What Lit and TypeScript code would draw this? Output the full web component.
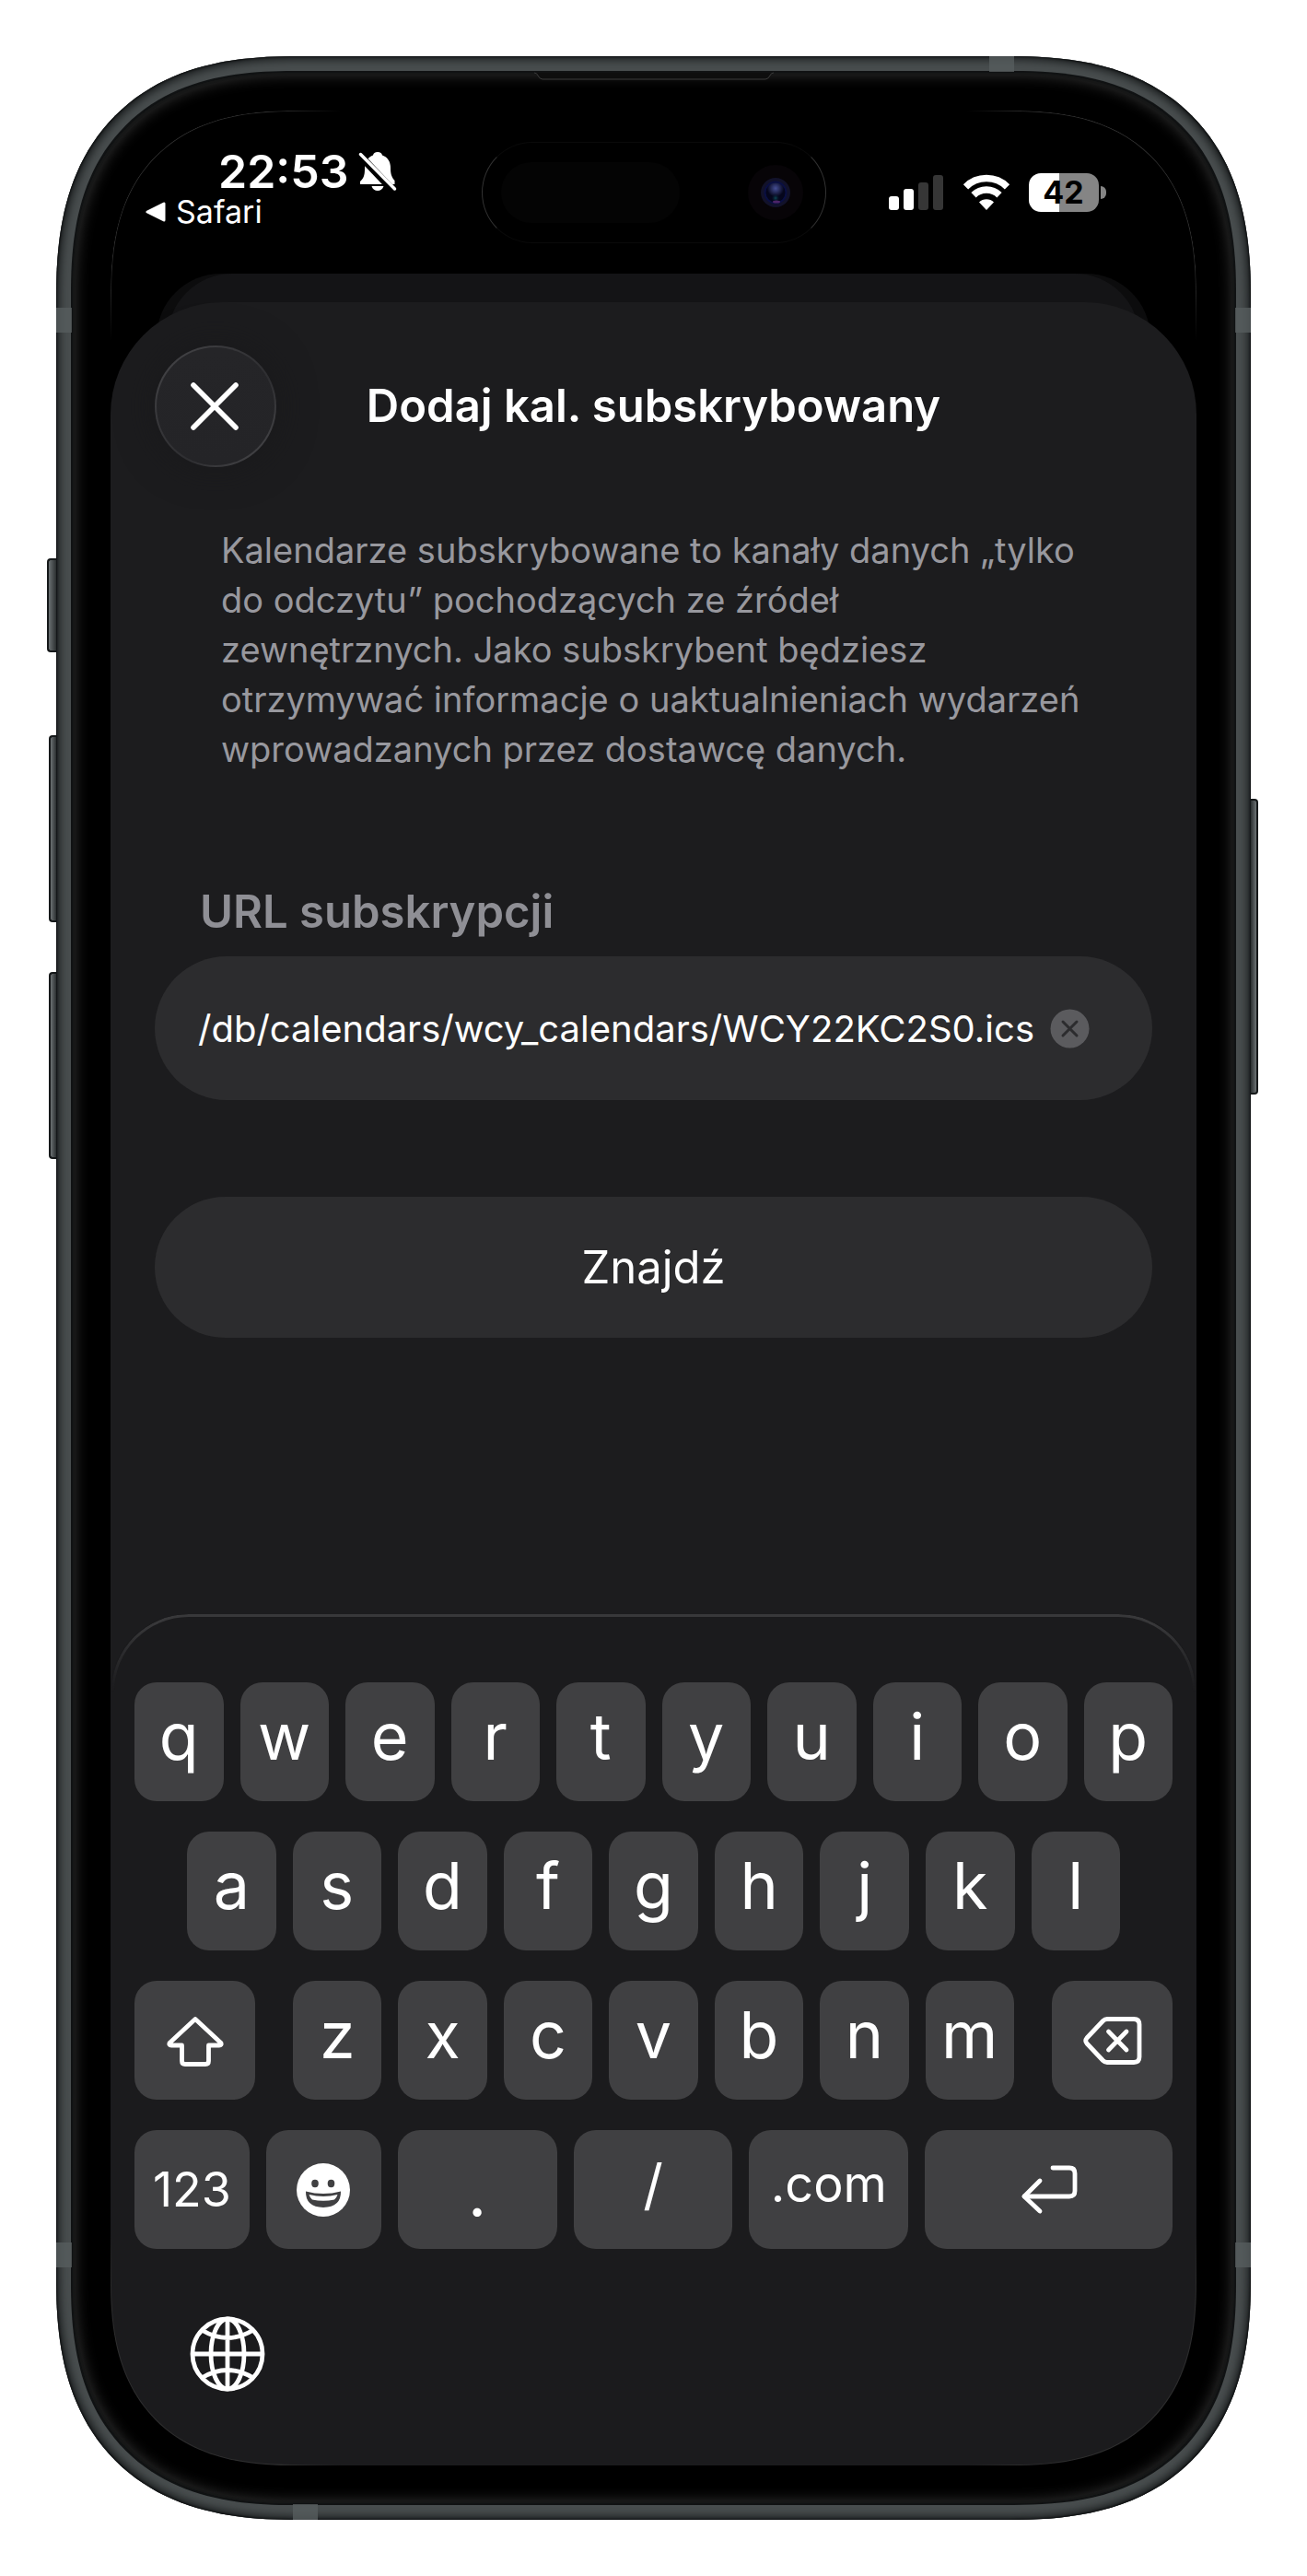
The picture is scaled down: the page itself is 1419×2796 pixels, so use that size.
import { LitElement, html, css, svg } from "lit";
import { customElement, state } from "lit/decorators.js";

const bellOff = svg`<svg class="bell" viewBox="0 0 42 44" aria-hidden="true">
  <path d="M21 1c3 0 4.500 1.500 5 3.500 6 2 9 7 9 14 0 7 1.500 10 4.500 13.500V36H2v-3c3.500-3 5-6.500 5-13.500C7 12 10 6.500 16 4.500 16.500 2.500 18 1 21 1z" fill="#fff"/>
  <path d="M14.500 38h13c-1 3.200-3.600 5-6.500 5s-5.500-1.800-6.500-5z" fill="#fff"/>
  <path d="M0 3 38 43" stroke="#000" stroke-width="8"/>
  <path d="M2.500 3.500 39.500 41" stroke="#fff" stroke-width="3.500" stroke-linecap="round"/>
</svg>`;

const signal = svg`<svg class="signal" viewBox="0 0 60 40" aria-hidden="true">
  <rect x="0" y="24" width="11" height="15" rx="3" fill="#fff"/>
  <rect x="16" y="16" width="11" height="23" rx="3" fill="#fff"/>
  <rect x="32" y="9" width="11" height="30" rx="3" fill="#363636"/>
  <rect x="48" y="1" width="11" height="38" rx="3" fill="#363636"/>
</svg>`;

const wifi = svg`<svg class="wifi" viewBox="0 0 52 40" aria-hidden="true">
  <g fill="none" stroke="#fff" stroke-width="7.500">
    <path d="M3.500 13.800a32 32 0 0 1 45 0"/>
    <path d="M12 22.800a20 20 0 0 1 28 0"/>
  </g>
  <path d="M26 39l-8-8.500a11.500 11.500 0 0 1 16 0z" fill="#fff"/>
</svg>`;

const shiftIcon = svg`<svg class="icon" viewBox="0 0 64 56" aria-hidden="true">
  <path d="M32 4.500 60 30.500q1 2.500-2 2.500H46.500v17q0 3.500-3.500 3.500H21q-3.500 0-3.500-3.500V33H6q-3 0-2-2.500z" fill="none" stroke="#fff" stroke-width="4.800" stroke-linejoin="round"/>
</svg>`;

const deleteIcon = svg`<svg class="icon" viewBox="0 0 64 56" aria-hidden="true">
  <g fill="none" stroke="#fff" stroke-width="4.800" stroke-linejoin="round" stroke-linecap="round">
    <path d="M26 4.500h29q6 0 6 6v35q0 6-6 6H26q-2.500 0-4.500-2L4 31q-2.500-3 0-6L21.500 6.500q2-2 4.500-2z"/>
    <path d="M27.500 18 47 38M47 18 27.500 38"/>
  </g>
</svg>`;

const returnIcon = svg`<svg class="icon" viewBox="0 0 64 56" aria-hidden="true">
  <g fill="none" stroke="#fff" stroke-width="4.800" stroke-linejoin="round" stroke-linecap="round">
    <path d="M36 4h18q6 0 6 6v19q0 6-6 6H5"/>
    <path d="M22 18 5 35l17 16"/>
  </g>
</svg>`;

const emojiIcon = svg`<svg class="icon" viewBox="0 0 64 64" aria-hidden="true">
  <circle cx="32" cy="32" r="29" fill="#fff"/>
  <ellipse cx="23" cy="25" rx="3.800" ry="4.200" fill="#404042"/>
  <ellipse cx="40.500" cy="25" rx="3.800" ry="4.200" fill="#404042"/>
  <path d="M13 33.500q19 5 38 0 .5 17-19 17.500-19.500-.5-19-17.500z" fill="#404042"/>
  <path d="M16.500 37q15.500 4 31 0-1 3.500-3.500 5.500-12 2.500-24 0-2.500-2-3.500-5.500z" fill="#fff"/>
</svg>`;

const globeIcon = svg`<svg class="globe-icon" viewBox="0 0 82 82" aria-hidden="true">
  <g fill="none" stroke="#fff" stroke-width="4.800">
    <circle cx="41" cy="41" r="38"/>
    <ellipse cx="41" cy="41" rx="18" ry="38"/>
    <path d="M41 3v76M3 41h76M13 15q28 17 56 0M13 67q28-17 56 0"/>
  </g>
</svg>`;

@customElement("ios-key")
class IosKey extends LitElement {
  static properties = { name: {} };
  name = "";
  static styles = css`
    :host { display: flex; }
    button {
      flex: 1;
      min-width: 0;
      height: 129px;
      padding: 0;
      border: 0;
      border-radius: 24px;
      background: #404042;
      color: #fff;
      font: inherit;
      display: flex;
      align-items: center;
      justify-content: center;
    }
  `;
  render() {
    return html`<button type="button" aria-label=${this.name}><slot></slot></button>`;
  }
}

@customElement("ios-keyboard")
class IosKeyboard extends LitElement {
  static styles = css`
    :host {
      display: block;
      position: relative;
      padding: 74px 26px 80px;
      background: #1b1b1d;
      border-radius: 84px 84px 0 0;
      font-size: 70px;
      line-height: 84px;
    }
    .edge {
      position: absolute;
      inset: 0 1px auto;
      height: 100px;
      box-sizing: border-box;
      border: 3px solid #38383a;
      border-bottom: 0;
      border-radius: 84px 84px 0 0;
      mask-image: linear-gradient(#000 10px, transparent 84px);
      pointer-events: none;
    }
    .rows { display: flex; flex-direction: column; gap: 33px; }
    .row { display: flex; gap: 18px; }
    .home { padding: 0 57px; }
    .letters { flex: 1; display: flex; gap: 18px; padding: 0 23px; }
    .letter { flex: 1 1 0; min-width: 0; }
    .cap { padding-bottom: 12px; }
    .side { flex: 0 0 131px; }
    .mode { flex: 125 1 0; font-size: 52px; min-width: 0; }
    .symbol { flex: 173 1 0; min-width: 0; }
    .slash { font-size: 60px; }
    .domain { font-size: 54px; }
    .enter { flex: 269 1 0; min-width: 0; }
    .dot { padding-top: 8px; }
    .icon { display: block; width: 64px; }
    .globe {
      display: block;
      margin: 73px 0 0 60px;
      padding: 0;
      border: 0;
      background: none;
    }
    .globe-icon { display: block; width: 82px; height: 82px; }
  `;
  private letters(keys: string) {
    return [...keys].map(
      (k) => html`<ios-key class="letter" name=${k}><span class="cap">${k}</span></ios-key>`
    );
  }
  render() {
    return html`
      <div class="edge"></div>
      <div class="rows">
        <div class="row">${this.letters("qwertyuiop")}</div>
        <div class="row home">${this.letters("asdfghjkl")}</div>
        <div class="row">
          <ios-key class="side" name="Shift">${shiftIcon}</ios-key>
          <div class="letters">${this.letters("zxcvbnm")}</div>
          <ios-key class="side" name="Usuń">${deleteIcon}</ios-key>
        </div>
        <div class="row">
          <ios-key class="mode" name="123">123</ios-key>
          <ios-key class="mode" name="Emoji">${emojiIcon}</ios-key>
          <ios-key class="symbol" name="."><span class="dot">.</span></ios-key>
          <ios-key class="symbol slash" name="/"><span class="cap">/</span></ios-key>
          <ios-key class="symbol domain" name=".com"><span class="cap">.com</span></ios-key>
          <ios-key class="enter" name="Enter">${returnIcon}</ios-key>
        </div>
      </div>
      <button class="globe" type="button" aria-label="Klawiatura">${globeIcon}</button>
    `;
  }
}

@customElement("status-bar")
class StatusBar extends LitElement {
  static styles = css`
    :host {
      display: grid;
      grid-template-columns: 1fr 374px 1fr;
      align-items: center;
      padding: 34px 0 33px;
      color: #fff;
    }
    .left { padding: 0 0 10px 38px; }
    .clock { display: flex; align-items: center; gap: 10px; padding-left: 79px; font-size: 50px; line-height: 50px; font-weight: 600; }
    .back { display: flex; align-items: center; gap: 11px; margin-top: 2px; font-size: 34px; line-height: 34px; color: #fff; text-decoration: none; }
    .arrow { width: 22px; height: 22px; }
    .bell { width: 42px; height: 44px; }
    .island {
      box-sizing: border-box;
      height: 110px;
      padding: 0 20px;
      border: 1px solid #0a0a0a;
      border-left-color: #333;
      border-right-color: #333;
      border-radius: 55px;
      display: flex;
      align-items: center;
      justify-content: space-between;
    }
    .sensor { width: 194px; height: 66px; border-radius: 33px; background: #040404; }
    .camera { width: 60px; height: 60px; margin-right: 4px; }
    .right { display: flex; align-items: center; gap: 20px; padding-left: 68px; }
    .signal { width: 60px; height: 40px; }
    .wifi { width: 52px; height: 40px; }
    .battery { display: flex; align-items: center; gap: 2px; }
    .level {
      width: 76px;
      height: 42px;
      border-radius: 13px;
      background: linear-gradient(90deg, #fff 43%, #858585 43%);
      color: #000;
      font-size: 34px;
      line-height: 42px;
      font-weight: 700;
      text-align: center;
    }
    .nub { width: 6px; height: 14px; border-radius: 0 6px 6px 0; background: #858585; }
  `;
  render() {
    return html`
      <div class="left">
        <div class="clock"><span>22:53</span>${bellOff}</div>
        <a class="back" href="#">
          <svg class="arrow" viewBox="0 0 22 22" aria-hidden="true">
            <path d="M2 11 20 2v18z" fill="#fff" stroke="#fff" stroke-width="3" stroke-linejoin="round" />
          </svg>
          <span>Safari</span>
        </a>
      </div>
      <div class="island">
        <div class="sensor"></div>
        <svg class="camera" viewBox="0 0 60 60" aria-hidden="true">
          <defs>
            <radialGradient id="sheen" cx="50%" cy="30%" r="40%">
              <stop offset="0" stop-color="#454e94" />
              <stop offset="1" stop-color="#05061c" />
            </radialGradient>
            <radialGradient id="glow" cx="50%" cy="50%" r="50%">
              <stop offset="0" stop-color="#0c4a56" />
              <stop offset="1" stop-color="#05061c" stop-opacity="0" />
            </radialGradient>
          </defs>
          <circle cx="30" cy="30" r="30" fill="#070407" />
          <circle cx="30" cy="30" r="16" fill="#12122a" />
          <circle cx="30" cy="30" r="11.500" fill="url(#sheen)" stroke="#0a0f42" stroke-width="2" />
          <circle cx="30" cy="36" r="5" fill="url(#glow)" />
          <ellipse cx="31" cy="40" rx="4" ry="1.500" fill="#4c2468" />
        </svg>
      </div>
      <div class="right">
        ${signal}${wifi}
        <div class="battery"><div class="level">42</div><div class="nub"></div></div>
      </div>
    `;
  }
}

@customElement("app-root")
class AppRoot extends LitElement {
  @state() private url = "/db/calendars/wcy_calendars/WCY22KC2S0.ics";

  static styles = css`
    :host {
      display: block;
      padding: 61px;
      background: #fff;
      font-family: Inter, "Liberation Sans", sans-serif;
    }
    .phone {
      position: relative;
      padding: 18px;
      border-radius: 226px;
      background: #484d4e;
      box-shadow: inset 0 0 2px 1px #101213, inset 0 0 9px 4px #1d2021;
    }
    .bezel {
      padding: 41px;
      border-radius: 208px;
      background: #000;
      box-shadow: 0 0 0 2px #101213, inset 0 0 0 2px #161717, inset 0 0 16px 2px #333;
    }
    .screen {
      position: relative;
      overflow: hidden;
      border-radius: 172px;
      background: #000;
    }
    .hairline {
      position: absolute;
      inset: 0;
      border: 1px solid #2e2e2e;
      border-radius: 172px;
      pointer-events: none;
      mask:
        radial-gradient(circle at 0 0, #000 180px, transparent 250px) 0 0 / 50% 50% no-repeat,
        radial-gradient(circle at 100% 0, #000 180px, transparent 250px) 100% 0 / 50% 50% no-repeat,
        radial-gradient(circle at 0 100%, #000 180px, transparent 250px) 0 100% / 50% 50% no-repeat,
        radial-gradient(circle at 100% 100%, #000 180px, transparent 250px) 100% 100% / 50% 50% no-repeat;
    }
    @supports (corner-shape: superellipse(1.3)) {
      .phone, .bezel, .screen, .hairline { corner-shape: superellipse(1.3); }
      .phone { border-radius: 262px; }
      .bezel { border-radius: 241px; }
      .screen, .hairline { border-radius: 200px; }
    }
    .band { position: absolute; background: #565d5e; opacity: 0.8; }
    .band.h { width: 27px; height: 17px; }
    .band.v { width: 17px; height: 27px; }
    .top { top: 0; right: 257px; }
    .bottom { bottom: 0; left: 257px; }
    .left { left: 0; }
    .right { right: 0; }
    .upper { top: 273px; }
    .lower { bottom: 274px; }
    .hw {
      position: absolute;
      box-sizing: border-box;
      border: 2px solid #151819;
      background: linear-gradient(90deg, #6b7173, #2b2f30);
    }
    .hw.l { right: 100%; width: 8px; border-right: 0; border-radius: 4px 0 0 4px; }
    .hw.r { left: 100%; width: 8px; border-left: 0; border-radius: 0 4px 4px 0; background: linear-gradient(270deg, #6b7173, #2b2f30); }
    .hw.action { top: 545px; height: 102px; width: 10px; }
    .hw.up { top: 737px; height: 203px; }
    .hw.down { top: 994px; height: 203px; }
    .hw.power { top: 806px; height: 321px; }
    .earpiece { position: absolute; top: 17px; left: 50%; width: 260px; height: 9px; margin-left: -130px; }
    .behind { height: 140px; margin: 0 50px; padding: 0 12px; border-radius: 84px; background: #0c0c0d; }
    .behind-inner { height: 140px; border-radius: 100px; background: #141416; }
    .sheet {
      position: relative;
      margin-top: -109px;
      border-radius: 122px 122px 0 0;
      background: #1c1c1e;
    }
    .head {
      display: grid;
      grid-template-columns: 132px 1fr 132px;
      align-items: center;
      padding: 47px 48px 0;
    }
    .close {
      width: 132px;
      height: 132px;
      padding: 0;
      border: 2px solid transparent;
      border-radius: 50%;
      background:
        linear-gradient(#252528, #242427) padding-box,
        linear-gradient(135deg, #48484b, #38383b 30%, #2e2e31 60%, #4a4a4d) border-box;
      box-shadow: 0 0 40px #19191b;
      display: flex;
      align-items: center;
      justify-content: center;
    }
    .close svg { width: 60px; height: 60px; }
    h1 { margin: 0; color: #fff; font-size: 49px; line-height: 60px; font-weight: 600; text-align: center; white-space: nowrap; }
    .intro { margin: 63px 125px 0 120px; color: #98989e; font-size: 38px; line-height: 54px; }
    form { margin: 0; padding: 120px 48px 300px; }
    label { display: block; padding-left: 49px; color: #8f8f95; font-size: 49px; line-height: 60px; font-weight: 600; }
    .field {
      display: flex;
      align-items: center;
      gap: 14px;
      height: 156px;
      margin-top: 18px;
      padding: 0 68px 0 47px;
      border-radius: 78px;
      background: #2c2c2e;
    }
    .field input {
      flex: 1;
      min-width: 0;
      height: 60px;
      padding: 0;
      border: 0;
      outline: 0;
      background: none;
      color: #fff;
      font: inherit;
      font-size: 40px;
    }
    .clear { width: 43px; height: 43px; padding: 0; border: 0; background: none; }
    .clear svg { display: block; width: 43px; height: 43px; }
    .find {
      display: block;
      width: 100%;
      height: 153px;
      margin-top: 105px;
      padding: 0;
      border: 0;
      border-radius: 78px;
      background: #2c2c2e;
      color: #fff;
      font: inherit;
      font-size: 49px;
    }
  `;

  private onInput(e: Event) {
    this.url = (e.target as HTMLInputElement).value;
  }
  private clear() {
    this.url = "";
  }

  render() {
    return html`
      <div class="phone">
        <div class="hw l action"></div>
        <div class="hw l up"></div>
        <div class="hw l down"></div>
        <div class="hw r power"></div>
        <div class="bezel">
          <div class="screen">
            <status-bar></status-bar>
            <div class="behind"><div class="behind-inner"></div></div>
            <main class="sheet">
              <header class="head">
                <button class="close" type="button" aria-label="Zamknij">
                  <svg viewBox="0 0 60 60" aria-hidden="true">
                    <path d="M6 7 52 53M52 7 6 53" stroke="#fff" stroke-width="5.600" stroke-linecap="round" />
                  </svg>
                </button>
                <h1>Dodaj kal. subskrybowany</h1>
              </header>
              <p class="intro">
                Kalendarze subskrybowane to kanały danych „tylko do odczytu” pochodzących ze źródeł
                zewnętrznych. Jako subskrybent będziesz otrzymywać informacje o uaktualnieniach
                wydarzeń wprowadzanych przez dostawcę danych.
              </p>
              <form @submit=${(e: Event) => e.preventDefault()}>
                <label for="url">URL subskrypcji</label>
                <div class="field">
                  <input id="url" type="text" .value=${this.url} @input=${this.onInput} />
                  <button class="clear" type="button" aria-label="Wyczyść" @click=${this.clear}>
                    <svg viewBox="0 0 43 43" aria-hidden="true">
                      <circle cx="21.500" cy="21.500" r="21" fill="#5b5b5e" />
                      <path d="M14 14 29 29M29 14 14 29" stroke="#2c2c2e" stroke-width="3" stroke-linecap="round" />
                    </svg>
                  </button>
                </div>
                <button class="find" type="submit">Znajdź</button>
              </form>
              <ios-keyboard></ios-keyboard>
            </main>
            <div class="hairline"></div>
          </div>
        </div>
        <svg class="earpiece" viewBox="0 0 260 9" aria-hidden="true">
          <path d="M0 1h260l-4 2q-2 5-5 5H9q-3 0-5-5z" fill="#0e0e0e" />
          <path d="M0 1q3 0 4 3 2 4 5 4h242q3 0 5-4 1-3 4-3" fill="none" stroke="#3a3a3a" />
        </svg>
        <div class="band h top"></div>
        <div class="band h bottom"></div>
        <div class="band v left upper"></div>
        <div class="band v right upper"></div>
        <div class="band v left lower"></div>
        <div class="band v right lower"></div>
      </div>
    `;
  }
}
